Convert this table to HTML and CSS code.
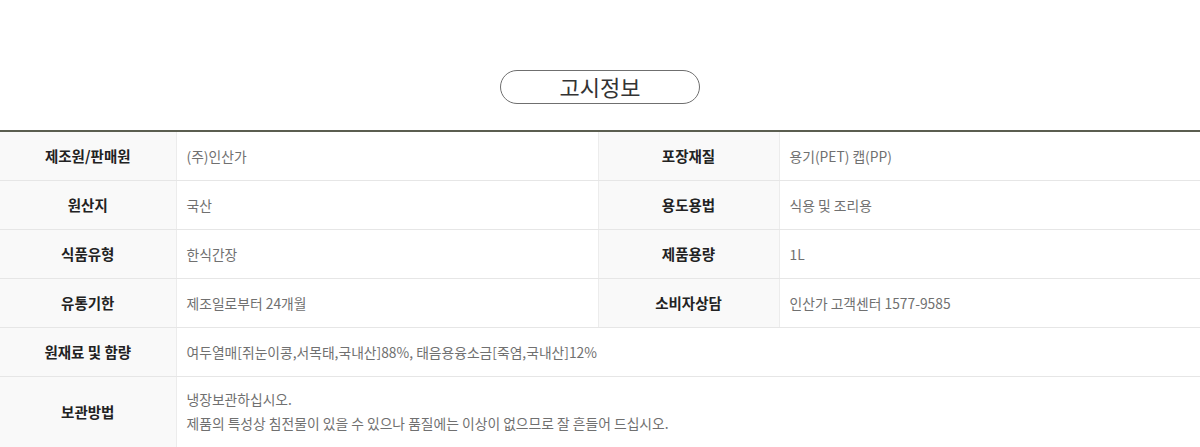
FILE: index.html
```html
<!DOCTYPE html>
<html>
<head>
  <meta charset="utf-8">
  <title>고시정보</title>
  <link rel="stylesheet" href="styles.css">
</head>
<body>
  <div class="notice">
    <h2 class="notice-title">고시정보</h2>
    <table class="notice-table">
      <colgroup>
        <col class="col-th1">
        <col class="col-td1">
        <col class="col-th2">
        <col class="col-td2">
      </colgroup>
      <tbody>
        <tr>
          <th>제조원/판매원</th>
          <td>(주)인산가</td>
          <th>포장재질</th>
          <td>용기(PET) 캡(PP)</td>
        </tr>
        <tr>
          <th>원산지</th>
          <td>국산</td>
          <th>용도용법</th>
          <td>식용 및 조리용</td>
        </tr>
        <tr>
          <th>식품유형</th>
          <td>한식간장</td>
          <th>제품용량</th>
          <td>1L</td>
        </tr>
        <tr>
          <th>유통기한</th>
          <td>제조일로부터 24개월</td>
          <th>소비자상담</th>
          <td>인산가 고객센터 1577-9585</td>
        </tr>
        <tr>
          <th>원재료 및 함량</th>
          <td colspan="3">여두열매[쥐눈이콩,서목태,국내산]88%, 태음용융소금[죽염,국내산]12%</td>
        </tr>
        <tr class="tall">
          <th>보관방법</th>
          <td colspan="3">냉장보관하십시오.<br>제품의 특성상 침전물이 있을 수 있으나 품질에는 이상이 없으므로 잘 흔들어 드십시오.</td>
        </tr>
      </tbody>
    </table>
  </div>
</body>
</html>
```

FILE: styles.css
```css
* {
  margin: 0;
  padding: 0;
  box-sizing: border-box;
}

body {
  font-family: "Noto Sans CJK KR", "Noto Sans", sans-serif;
  background-color: #fff;
  color: #333;
}

.notice {
  padding-top: 70px;
}

.notice-title {
  width: 200px;
  height: 34px;
  margin: 0 auto 26px;
  border: 1.5px solid #6f6f6f;
  border-radius: 17px;
  font-size: 22px;
  font-weight: 400;
  line-height: 30px;
  text-align: center;
  color: #333;
}

.notice-table {
  width: 100%;
  border-collapse: collapse;
  table-layout: fixed;
  border-top: 2px solid #5b5e50;
}

.col-th1 { width: 176px; }
.col-td1 { width: 422px; }
.col-th2 { width: 181px; }
.col-td2 { width: 421px; }

.notice-table th,
.notice-table td {
  height: 49px;
  border-bottom: 1px solid #e6e6e6;
  border-right: 1px solid #ececec;
  vertical-align: middle;
}

.notice-table th {
  background-color: #f9f9f9;
  color: #222;
  font-weight: 700;
  font-size: 14.5px;
  text-align: center;
}

.notice-table td {
  padding: 0 10px;
  color: #707070;
  font-size: 13.8px;
  text-align: left;
}

.notice-table td:last-child {
  border-right: none;
}

.notice-table .tall th,
.notice-table .tall td {
  height: 71px;
}

.notice-table .tall td {
  padding: 9px 10px 10px;
  line-height: 24px;
}
```
